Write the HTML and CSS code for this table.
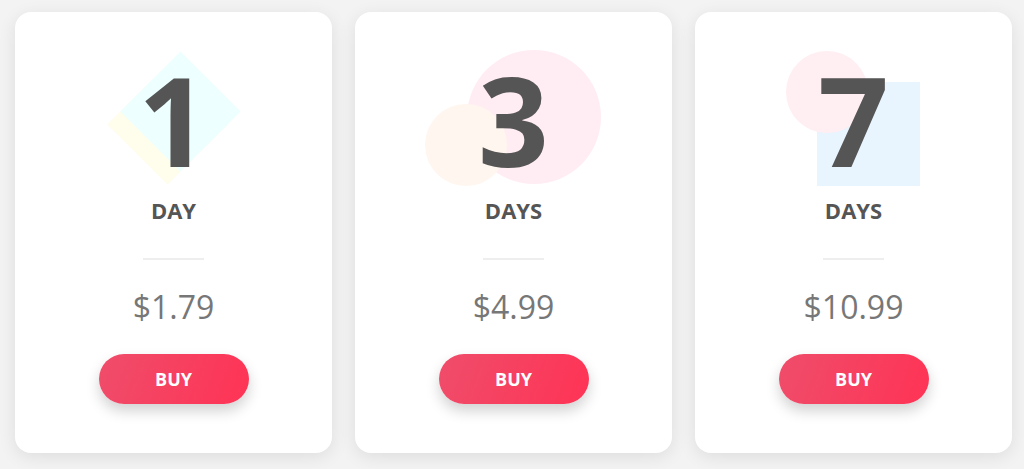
FILE: index.html
```html
<!DOCTYPE html>
<html lang="en">
<head>
<meta charset="utf-8">
<title>Pricing</title>
<link rel="stylesheet" href="styles.css">
</head>
<body>
<div class="plans">
  <div class="card">
    <div class="figure">
      <span class="shape diamond yellow"></span>
      <span class="shape diamond cyan"></span>
      <span class="num">1</span>
    </div>
    <div class="unit">DAY</div>
    <div class="divider"></div>
    <div class="price">$1.79</div>
    <button class="buy">BUY</button>
  </div>
  <div class="card">
    <div class="figure">
      <span class="shape circle-big"></span>
      <span class="shape circle-peach"></span>
      <span class="num">3</span>
    </div>
    <div class="unit">DAYS</div>
    <div class="divider"></div>
    <div class="price">$4.99</div>
    <button class="buy">BUY</button>
  </div>
  <div class="card">
    <div class="figure">
      <span class="shape square-blue"></span>
      <span class="shape circle-pink"></span>
      <span class="num">7</span>
    </div>
    <div class="unit">DAYS</div>
    <div class="divider"></div>
    <div class="price">$10.99</div>
    <button class="buy">BUY</button>
  </div>
</div>
</body>
</html>
```

FILE: styles.css
```css
* { box-sizing: border-box; }
html, body { margin: 0; padding: 0; }
body {
  background: #f3f3f3;
  font-family: "Open Sans", "Liberation Sans", sans-serif;
  height: 469px;
  overflow: hidden;
}
.plans {
  display: flex;
  gap: 23px;
  padding: 12px 12px 0 15px;
}
.card {
  width: 317px;
  height: 441px;
  background: #fff;
  border-radius: 16px;
  box-shadow: 0 4px 18px rgba(0, 0, 0, 0.09);
  display: flex;
  flex-direction: column;
  align-items: center;
  padding-top: 45px;
}
.figure {
  position: relative;
  width: 100%;
  height: 124px;
  text-align: center;
}
.num {
  position: relative;
  z-index: 2;
  font-size: 124px;
  line-height: 124px;
  font-weight: 700;
  color: #555;
}
.shape {
  position: absolute;
  display: block;
}
.diamond {
  width: 85px;
  height: 85px;
  transform: rotate(45deg);
}
.cyan { left: 123px; top: 12px; background: #edfffe; }
.yellow { left: 110px; top: 25px; background: #fffdec; }
.circle-big {
  left: 112px; top: -7px;
  width: 134px; height: 134px;
  border-radius: 50%;
  background: #ffedf3;
}
.circle-peach {
  left: 70px; top: 47px;
  width: 82px; height: 82px;
  border-radius: 50%;
  background: #fff6ef;
}
.square-blue {
  left: 122px; top: 25px;
  width: 103px; height: 104px;
  background: #e8f4fe;
}
.circle-pink {
  left: 91px; top: -6px;
  width: 82px; height: 82px;
  border-radius: 50%;
  background: #ffeef2;
}
.unit {
  margin-top: 14px;
  font-size: 22px;
  line-height: 30px;
  font-weight: 700;
  color: #555;
}
.divider {
  margin-top: 33px;
  width: 61px;
  height: 2px;
  background: #eeeeee;
}
.price {
  margin-top: 25px;
  font-size: 32px;
  line-height: 44px;
  color: #777;
}
.buy {
  margin-top: 25px;
  width: 150px;
  height: 50px;
  border: 0;
  border-radius: 25px;
  background: linear-gradient(110deg, #ef4d6b 0%, #ff3355 100%);
  box-shadow: 0 7px 14px rgba(0, 0, 0, 0.18);
  color: #fff;
  font-family: "Open Sans", "Liberation Sans", sans-serif;
  font-size: 18px;
  font-weight: 700;
  padding: 0;
}
```
